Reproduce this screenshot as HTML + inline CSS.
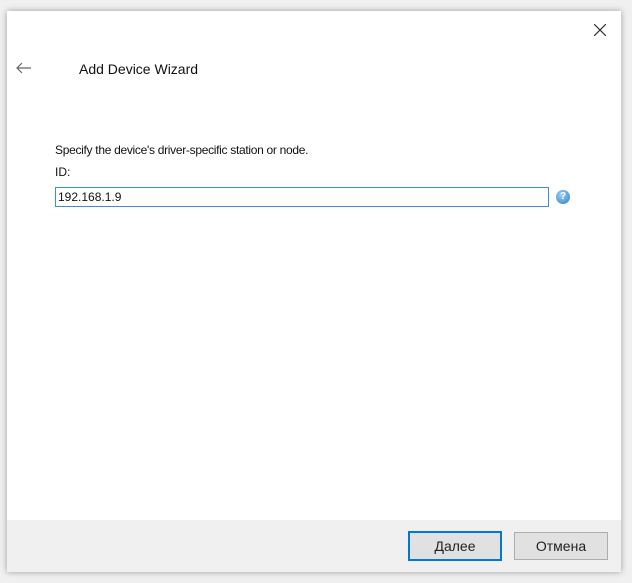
<!DOCTYPE html>
<html><head><style>
body{margin:0;width:632px;height:583px;background:#f0f0f0;position:relative;overflow:hidden;font-family:"Liberation Sans",sans-serif;}
.win{position:absolute;left:7px;top:11px;width:614px;height:561px;background:#fff;box-shadow:0 0 6px rgba(0,0,0,.35);}
.foot{position:absolute;left:0;right:0;bottom:0;height:52px;background:#f0f0f0;}
.btn{position:absolute;top:12px;width:92px;height:26px;border:1px solid #adadad;background:#e1e1e1;font-size:14px;text-align:center;line-height:26px;color:#222;box-sizing:content-box}
</style></head><body>
<div class="win">
<svg style="position:absolute;left:587px;top:13px" width="12" height="12"><path d="M0 0L12 12M12 0L0 12" stroke="#333" stroke-width="1.2"/></svg>
<svg style="position:absolute;left:9px;top:51px" width="16" height="12"><path d="M1 6H15M6 1L1 6L6 11" stroke="#666" stroke-width="1.2" fill="none"/></svg>
<div style="position:absolute;left:72px;top:50px;font-size:14px;color:#111">Add Device Wizard</div>
<div style="position:absolute;left:48px;top:132px;font-size:12px;color:#111;letter-spacing:-0.3px">Specify the device's driver-specific station or node.</div>
<div style="position:absolute;left:48px;top:154px;font-size:12px;color:#111">ID:</div>
<div style="position:absolute;left:48px;top:176px;width:490px;height:18px;border:1px solid #3c8fd6;font-size:12px;line-height:18px;padding-left:2px;color:#111">192.168.1.9</div>
<div style="position:absolute;left:549px;top:179px;width:14px;height:14px;border-radius:50%;background:radial-gradient(circle at 40% 35%,#9fd0f5,#2a7cc8);color:#fff;font-size:10px;font-weight:bold;text-align:center;line-height:14px">?</div>
<div class="foot">
<div class="btn" style="left:401px;border:2px solid #0078d7;top:11px;width:90px">Далее</div>
<div class="btn" style="left:507px">Отмена</div>
</div>
</div>
</body></html>
